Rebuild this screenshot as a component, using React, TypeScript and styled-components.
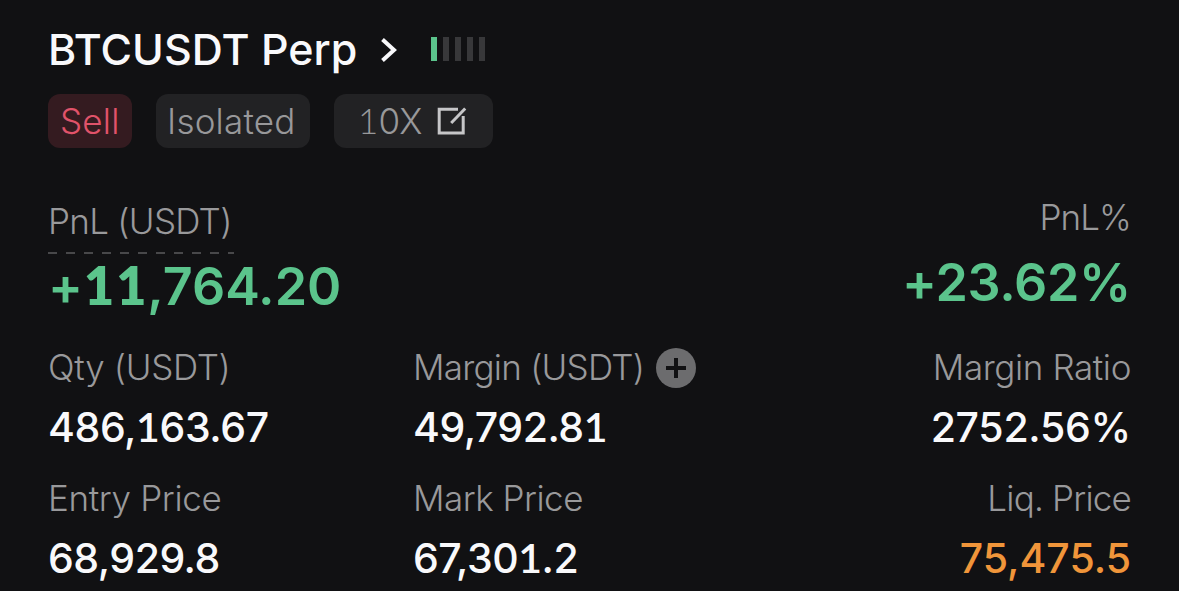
import * as React from "react";
import styled, { createGlobalStyle } from "styled-components";

const colors = {
  background: "#111113",
  text: "#f9f9fb",
  label: "#99999b",
  muted: "#98989a",
  chip: "#222224",
  sell: "#e0536a",
  sellChip: "#341b20",
  green: "#5bc48c",
  orange: "#f0953a",
  bar: "#38383a",
};

interface FigureProps {
  children: string;
}

// The ones carry a foot, so they are set in a face that has it.
const Figure: React.FC<FigureProps> = ({ children }) => (
  <>
    {children
      .split(/(1)/)
      .filter((part) => part !== "")
      .map((part, i) => (part === "1" ? <One key={i}>1</One> : part))}
  </>
);

const App: React.FC = () => (
  <>
    <GlobalStyle />
    <Card>
      <Header>
        <Title>BTCUSDT Perp</Title>
        <Chevron viewBox="0 0 18 26">
          <path d="M2.5 2.5 14 13 2.5 23.5" />
        </Chevron>
        <Strength>
          {[0, 1, 2, 3, 4].map((bar) => (
            <StrengthBar key={bar} $active={bar === 0} />
          ))}
        </Strength>
      </Header>

      <Chips>
        <SellChip>Sell</SellChip>
        <ModeChip>Isolated</ModeChip>
        <LeverageChip>
          <span>
            <Figure>10X</Figure>
          </span>
          <EditIcon viewBox="0 0 30 30">
            <path d="M21 3.2H2.2V27H26.2V10" />
            <path d="M14.2 17 28.2 2.5" />
          </EditIcon>
        </LeverageChip>
      </Chips>

      <Summary>
        <Cell>
          <Label $track={-0.7}>PnL (USDT)</Label>
          <Dashes />
          <Profit $track={0}>
            <Figure>+11,764.20</Figure>
          </Profit>
        </Cell>
        <RateCell>
          <Label $track={-0.9}>PnL%</Label>
          <Rate $track={-0.3}>+23.62%</Rate>
        </RateCell>
      </Summary>

      <Stats>
        <Cell>
          <Label $track={-0.3}>Qty (USDT)</Label>
          <Value $track={-0.4}>
            <Figure>486,163.67</Figure>
          </Value>
        </Cell>
        <Cell>
          <LabelLine>
            <Label $track={-0.75}>Margin (USDT)</Label>
            <AddIcon viewBox="0 0 40 40">
              <circle cx="20" cy="20" r="20" />
              <path d="M10 20H30M20 10V30" />
            </AddIcon>
          </LabelLine>
          <Value $track={-0.5}>
            <Figure>49,792.81</Figure>
          </Value>
        </Cell>
        <EndCell>
          <Label $track={-0.4}>Margin Ratio</Label>
          <Value $track={-0.3}>2752.56%</Value>
        </EndCell>
        <Cell>
          <Label $track={-0.35}>Entry Price</Label>
          <Value $track={-0.5}>68,929.8</Value>
        </Cell>
        <Cell>
          <Label $track={-0.5}>Mark Price</Label>
          <Value $track={-0.5}>
            <Figure>67,301.2</Figure>
          </Value>
        </Cell>
        <EndCell>
          <Label $track={-0.8}>Liq. Price</Label>
          <Value $track={0} $warn>
            75,475.5
          </Value>
        </EndCell>
      </Stats>
    </Card>
  </>
);

export default App;

const GlobalStyle = createGlobalStyle`
  * {
    box-sizing: border-box;
  }

  body {
    margin: 0;
    background: ${colors.background};
    font-family: Inter, "Liberation Sans", sans-serif;
    -webkit-font-smoothing: antialiased;
  }
`;

const Card = styled.main`
  height: 591px;
  padding: 24px 48px 0;
  overflow: hidden;
  background: ${colors.background};
  color: ${colors.text};
  white-space: nowrap;
`;

const Header = styled.header`
  display: flex;
  align-items: center;
  height: 52px;
`;

const Title = styled.h1`
  width: 332px;
  margin: 0;
  font-size: 43px;
  font-weight: 500;
  line-height: 50px;
  padding-bottom: 2px;
`;

const Chevron = styled.svg`
  width: 18px;
  height: 26px;
  fill: none;
  stroke: ${colors.text};
  stroke-width: 4;
`;

const Strength = styled.div`
  display: flex;
  gap: 6px;
  margin: 0 0 2px 33px;
`;

const StrengthBar = styled.span<{ $active: boolean }>`
  width: 6px;
  height: 24px;
  background: ${({ $active }) => ($active ? colors.green : colors.bar)};
`;

const Chips = styled.div`
  display: flex;
  gap: 24px;
  margin-top: 18px;
`;

const Chip = styled.span`
  display: flex;
  align-items: center;
  height: 54px;
  border-radius: 12px;
  background: ${colors.chip};
  color: ${colors.muted};
  font-size: 35px;
  font-weight: 300;
  line-height: 54px;
  letter-spacing: 0.2px;
`;

const SellChip = styled(Chip)`
  width: 84px;
  padding-left: 12px;
  background: ${colors.sellChip};
  color: ${colors.sell};
`;

const ModeChip = styled(Chip)`
  width: 154px;
  padding-left: 11px;
`;

const LeverageChip = styled(Chip)`
  justify-content: space-between;
  width: 159px;
  padding: 0 26px 0 24px;
`;

const EditIcon = styled.svg`
  width: 30px;
  height: 30px;
  fill: none;
  stroke: #c6c6c8;
  stroke-width: 3;
`;

const Summary = styled.section`
  display: flex;
  justify-content: space-between;
  height: 118px;
  margin-top: 51px;
`;

const Stats = styled.section`
  display: grid;
  grid-template-columns: 365px 1fr auto;
  row-gap: 24px;
  margin-top: 28px;
`;

const Cell = styled.div`
  display: flex;
  flex-direction: column;
  align-items: flex-start;
`;

const EndCell = styled(Cell)`
  align-items: flex-end;
`;

const RateCell = styled(EndCell)`
  margin-top: -4px;
`;

const Label = styled.span<{ $track: number }>`
  color: ${colors.label};
  font-size: 35px;
  font-weight: 300;
  line-height: 44px;
  letter-spacing: ${({ $track }) => $track}px;
`;

const LabelLine = styled.div`
  display: flex;
  align-items: center;
  gap: 12px;
`;

const AddIcon = styled.svg`
  width: 40px;
  height: 40px;
  margin: 2px 0 0;
  fill: #6c6c6e;
  stroke: none;

  path {
    stroke: ${colors.background};
    stroke-width: 4;
  }
`;

const Dashes = styled.div`
  width: 186px;
  height: 3px;
  margin: 9px 0 3px;
  background: repeating-linear-gradient(to right, #48484a 0 9px, transparent 9px 18px);
`;

const Value = styled.span<{ $track: number; $warn?: boolean }>`
  margin-top: 13px;
  color: ${({ $warn }) => ($warn ? colors.orange : colors.text)};
  font-size: 41px;
  font-weight: 500;
  line-height: 50px;
  letter-spacing: ${({ $track }) => $track}px;
`;

const Profit = styled.strong<{ $track: number }>`
  color: ${colors.green};
  font-size: 52px;
  font-weight: 600;
  line-height: 60px;
  letter-spacing: ${({ $track }) => $track}px;
`;

const Rate = styled(Profit)`
  margin-top: 14px;
`;

const One = styled.span`
  font-family: Lato, Inter, sans-serif;
  line-height: 1;

  ${Profit} & {
    margin: 0 1px;
    font-weight: 800;
  }

  ${Value} & {
    font-weight: 600;
  }
`;
